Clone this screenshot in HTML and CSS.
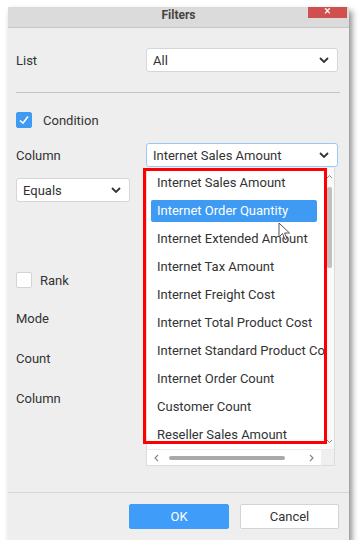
FILE: index.html
```html
<!DOCTYPE html>
<html lang="en">
<head>
    <meta charset="UTF-8">
    <title>Filters</title>
    <link rel="stylesheet" href="styles.css">
</head>
<body>
    <div class="dialog">
        <div class="header">
            <span class="title">Filters</span>
            <span class="close">&#215;</span>
        </div>

        <div class="body">
            <div class="row list-row">
                <span class="label">List</span>
                <div class="select">
                    <span>All</span>
                    <svg class="chev" width="10" height="6" viewBox="0 0 10 6"><polyline points="1,1 5,5 9,1" fill="none" stroke="#333" stroke-width="1.8"/></svg>
                </div>
            </div>

            <div class="divider"></div>

            <div class="row check-row condition-row">
                <span class="box checked">
                    <svg width="16" height="16" viewBox="0 0 16 16"><polyline points="4,8.5 7,11 12,4.5" fill="none" stroke="#fff" stroke-width="1.6"/></svg>
                </span>
                <span class="check-label">Condition</span>
            </div>

            <div class="row column-row">
                <span class="label">Column</span>
                <div class="select focused">
                    <span>Internet Sales Amount</span>
                    <svg class="chev" width="10" height="6" viewBox="0 0 10 6"><polyline points="1,1 5,5 9,1" fill="none" stroke="#333" stroke-width="1.8"/></svg>
                </div>
            </div>

            <div class="row equals-row">
                <div class="select small">
                    <span>Equals</span>
                    <svg class="chev" width="10" height="6" viewBox="0 0 10 6"><polyline points="1,1 5,5 9,1" fill="none" stroke="#333" stroke-width="1.8"/></svg>
                </div>
            </div>

            <div class="row check-row rank-row">
                <span class="box"></span>
                <span class="check-label near">Rank</span>
            </div>

            <div class="row text-row mode-row"><span class="label">Mode</span></div>
            <div class="row text-row"><span class="label">Count</span></div>
            <div class="row text-row"><span class="label">Column</span></div>
        </div>

        <div class="footer">
            <button class="btn ok">OK</button>
            <button class="btn cancel">Cancel</button>
        </div>

        <!-- open dropdown of the Column select -->
        <div class="popup">
            <ul class="items">
                <li>Internet Sales Amount</li>
                <li class="active">Internet Order Quantity</li>
                <li>Internet Extended Amount</li>
                <li>Internet Tax Amount</li>
                <li>Internet Freight Cost</li>
                <li>Internet Total Product Cost</li>
                <li>Internet Standard Product Cost</li>
                <li>Internet Order Count</li>
                <li>Customer Count</li>
                <li>Reseller Sales Amount</li>
            </ul>
            <div class="vscroll">
                <svg class="arrow up" width="7" height="5" viewBox="0 0 7 5"><polyline points="1,4 3.5,1.5 6,4" fill="none" stroke="#888" stroke-width="1"/></svg>
                <div class="vthumb"></div>
                <svg class="arrow down" width="7" height="5" viewBox="0 0 7 5"><polyline points="1,1 3.5,3.5 6,1" fill="none" stroke="#888" stroke-width="1"/></svg>
            </div>
            <div class="hscroll">
                <svg width="5" height="8" viewBox="0 0 5 8"><polyline points="4,1 1,4 4,7" fill="none" stroke="#888" stroke-width="1.2"/></svg>
                <div class="hthumb"></div>
                <svg width="5" height="8" viewBox="0 0 5 8"><polyline points="1,1 4,4 1,7" fill="none" stroke="#888" stroke-width="1.2"/></svg>
                <div class="corner"></div>
            </div>
        </div>

        <div class="highlight"></div>

        <svg class="cursor" width="13" height="19" viewBox="0 0 13 19">
            <path d="M1 1 L1 15 L4.5 11.5 L7 17.5 L9 16.6 L6.6 11 L11.5 11 Z" fill="#fff" stroke="#555" stroke-width="1"/>
        </svg>
    </div>
</body>
</html>
```

FILE: styles.css
```css
* {
    margin: 0;
    padding: 0;
    box-sizing: border-box;
}

body {
    background: #fff;
    font-family: Roboto, "Liberation Sans", sans-serif;
    font-size: 13px;
    color: #333;
    padding: 7px 0 0 8px;
}

.dialog {
    position: relative;
    width: 341px;
    height: 533px;
    background: #eeeeee;
    display: flex;
    flex-direction: column;
    box-shadow: 3px 4px 6px rgba(0, 0, 0, 0.45);
}

.header {
    height: 21px;
    background: #dbdbdb;
    border-bottom: 1px solid #c6c6c6;
    display: flex;
    justify-content: center;
    align-items: center;
    padding-bottom: 5px;
    position: relative;
}

.title {
    font-size: 12px;
    font-weight: bold;
    color: #444;
}

.close {
    position: absolute;
    top: 0;
    right: 2px;
    width: 39px;
    height: 11px;
    background: #d0504f;
    color: #fff;
    font-size: 12px;
    line-height: 8px;
    text-align: center;
}

.body {
    flex: 1;
    padding: 0 11px 0 8px;
    display: flex;
    flex-direction: column;
}

.row {
    display: flex;
    align-items: center;
}

.label {
    width: 130px;
    font-size: 13px;
}

.list-row { margin-top: 20px; }

.select {
    width: 192px;
    height: 24px;
    background: #fff;
    border: 1px solid #d6d6d6;
    border-radius: 3px;
    display: flex;
    align-items: center;
    justify-content: space-between;
    padding: 0 8px 0 6px;
    font-size: 13px;
}

.select.focused { border-color: #9cc9f2; }

.select.small { width: 114px; }

.divider {
    margin-top: 20px;
    height: 1px;
    margin-right: -2px;
    background: #c3c3c3;
}

.check-row { height: 16px; }

.condition-row { margin-top: 19px; }

.box {
    width: 16px;
    height: 16px;
    border-radius: 2px;
    background: #fff;
    border: 1px solid #d4d4d4;
}

.box.checked {
    background: #3e9af3;
    border-color: #3e9af3;
}

.box svg {
    display: block;
    margin: -1px;
}

.check-label {
    margin-left: 11px;
    font-size: 13px;
}

.check-label.near { margin-left: 8px; }

.column-row { margin-top: 15px; }

.equals-row { margin-top: 11px; }

.rank-row { margin-top: 70px; }

.text-row {
    height: 16px;
    margin-top: 24px;
}

.mode-row { margin-top: 22px; }

.footer {
    height: 48px;
    border-top: 1px solid #d7d7d7;
    display: flex;
    justify-content: flex-end;
    align-items: center;
    gap: 11px;
    padding-right: 10px;
}

.btn {
    width: 100px;
    height: 25px;
    border-radius: 2px;
    font-family: Roboto, "Liberation Sans", sans-serif;
    font-size: 13px;
}

.btn.ok {
    background: #3f9cf8;
    border: 1px solid #3f9cf8;
    color: #fff;
}

.btn.cancel {
    width: 99px;
    background: #fff;
    border: 1px solid #d3d3d3;
    color: #333;
}

/* dropdown list */
.popup {
    position: absolute;
    left: 138px;
    top: 161px;
    width: 189px;
    height: 298px;
    background: #fff;
    border: 1px solid #dcdcdc;
    border-top: none;
    display: grid;
    grid-template-columns: 1fr 9px;
    grid-template-rows: 1fr 16px;
}

.items {
    list-style: none;
    overflow: hidden;
    display: flex;
    flex-direction: column;
    gap: 6px;
    padding: 4px 0 0 4px;
}

.items li {
    flex: none;
    height: 22px;
    line-height: 22px;
    padding-left: 6px;
    white-space: nowrap;
    border-radius: 2px;
    width: 166px;
    font-size: 13px;
}

.items li.active {
    background: #3e9af3;
    color: #fff;
}

.vscroll {
    position: relative;
    background: #fafafa;
}

.vscroll .arrow {
    position: absolute;
    left: 1px;
}

.arrow.up { top: 6px; }

.arrow.down { bottom: 5px; }

.vthumb {
    position: absolute;
    top: 19px;
    left: 2px;
    width: 5px;
    height: 81px;
    background: #c1c1c1;
    border-radius: 2px;
}

.hscroll {
    grid-column: 1 / 3;
    display: flex;
    align-items: center;
    padding-left: 7px;
    border-top: 1px solid #ececec;
}

.hthumb {
    width: 116px;
    height: 4px;
    margin: 0 24px 0 10px;
    background: #a9a9a9;
    border-radius: 2px;
}

.corner {
    margin-left: auto;
    width: 13px;
    height: 15px;
    background: #efefef;
}

.highlight {
    position: absolute;
    left: 135px;
    top: 161px;
    width: 184px;
    height: 276px;
    border: 3px solid #ff0000;
}

.cursor {
    position: absolute;
    left: 270px;
    top: 215px;
}
```
